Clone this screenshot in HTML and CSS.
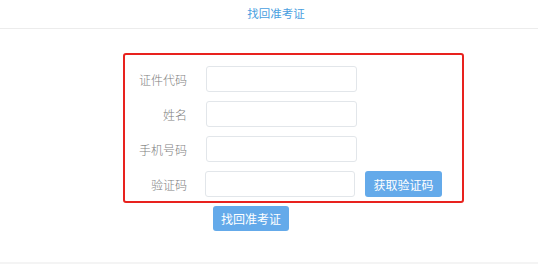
FILE: index.html
```html
<!DOCTYPE html>
<html lang="zh-CN">

<head>
    <meta charset="UTF-8">
    <meta name="viewport" content="width=device-width, initial-scale=1.0">
    <title>找回准考证</title>
    <link rel="stylesheet" href="styles.css">
</head>

<body>
    <div class="page-title">找回准考证</div>

    <div class="content">
        <div class="form-box">
            <div class="form-row">
                <label class="form-label">证件代码</label>
                <input type="text" class="form-input">
            </div>
            <div class="form-row">
                <label class="form-label">姓名</label>
                <input type="text" class="form-input">
            </div>
            <div class="form-row">
                <label class="form-label">手机号码</label>
                <input type="text" class="form-input">
            </div>
            <div class="form-row">
                <label class="form-label">验证码</label>
                <input type="text" class="form-input code-input">
                <button class="btn btn-code">获取验证码</button>
            </div>
        </div>
        <button class="btn btn-submit">找回准考证</button>
    </div>
</body>

</html>
```

FILE: styles.css
```css
* {
    box-sizing: border-box;
}

body {
    margin: 0;
    height: 264px;
    background: #fff;
    font-family: "Noto Sans CJK SC", "Microsoft YaHei", sans-serif;
    font-size: 12px;
    color: #666;
    border-bottom: 2px solid #f4f4f4;
}

/* naslov */
.page-title {
    height: 29px;
    line-height: 26px;
    padding-left: 14px;
    text-align: center;
    color: #4aa0e0;
    font-size: 11.5px;
    border-bottom: 1px solid #ececec;
}

.content {
    padding-top: 24px;
    padding-left: 123px;
}

.form-box {
    width: 341px;
    height: 150px;
    border: 2px solid #e8221e;
    border-radius: 3px;
    padding-top: 11px;
    display: flex;
    flex-direction: column;
    gap: 9px;
}

.form-row {
    display: flex;
    align-items: center;
    height: 26px;
}

.form-label {
    width: 62px;
    text-align: right;
    margin-right: 19px;
    color: #808080;
    font-weight: 300;
}

.form-input {
    width: 151px;
    height: 26px;
    border: 1px solid #e2e6ea;
    border-radius: 3px;
    outline: none;
    padding: 0 6px;
}

.code-input {
    width: 150px;
    margin-left: -1px;
}

.btn {
    border: none;
    border-radius: 3px;
    background: #64aaea;
    color: #fff;
    font-family: inherit;
    font-size: 12px;
    cursor: pointer;
    padding: 0;
}

.btn-code {
    width: 77px;
    height: 26px;
    margin-left: 10px;
}

.btn-submit {
    display: block;
    width: 76px;
    height: 25px;
    margin-top: 3px;
    margin-left: 90px;
}
```
